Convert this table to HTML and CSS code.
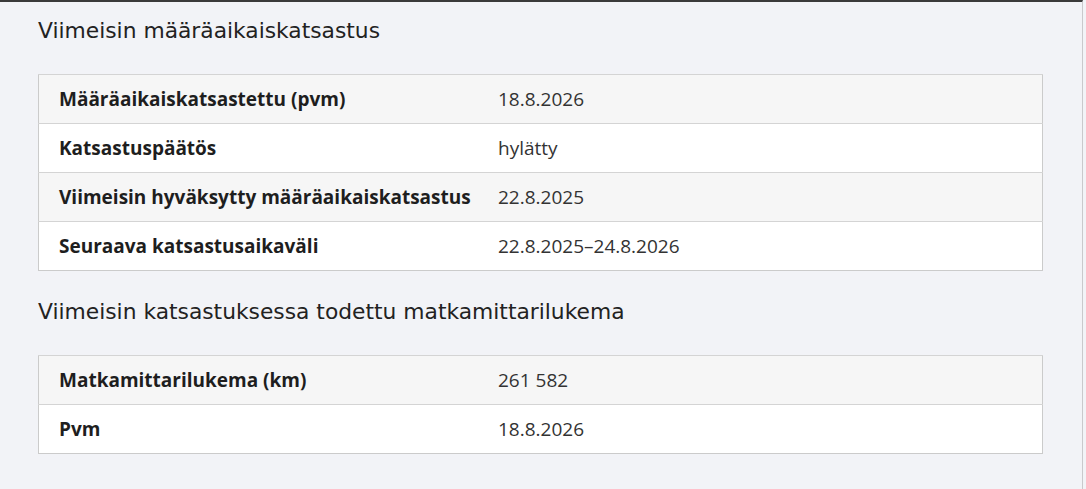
FILE: index.html
```html
<!DOCTYPE html>
<html lang="fi">
<head>
  <meta charset="UTF-8" />
  <title>Katsastustiedot</title>
  <link rel="stylesheet" href="styles.css">
</head>
<body>
  <div class="panel">
    <!-- Määräaikaiskatsastus -->
    <h2>Viimeisin määräaikaiskatsastus</h2>
    <table class="info-table">
      <tr>
        <th>Määräaikaiskatsastettu (pvm)</th>
        <td>18.8.2026</td>
      </tr>
      <tr>
        <th>Katsastuspäätös</th>
        <td>hylätty</td>
      </tr>
      <tr>
        <th>Viimeisin hyväksytty määräaikaiskatsastus</th>
        <td>22.8.2025</td>
      </tr>
      <tr>
        <th>Seuraava katsastusaikaväli</th>
        <td>22.8.2025–24.8.2026</td>
      </tr>
    </table>

    <!-- Matkamittarilukema -->
    <h2>Viimeisin katsastuksessa todettu matkamittarilukema</h2>
    <table class="info-table">
      <tr>
        <th>Matkamittarilukema (km)</th>
        <td>261 582</td>
      </tr>
      <tr>
        <th>Pvm</th>
        <td>18.8.2026</td>
      </tr>
    </table>
  </div>
</body>
</html>
```

FILE: styles.css
```css
body {
    margin: 0;
    padding: 0;
    font-family: "Open Sans", sans-serif;
    background-color: #f2f3f7;
    color: #222;
}

.panel {
    width: 1083px;
    height: 489px;
    box-sizing: border-box;
    border-top: 2px solid #3a3a3a;
    border-right: 1px solid #c9c9cc;
    padding: 14px 39px 0 38px;
}

h2 {
    font-family: "DejaVu Sans", sans-serif;
    font-weight: 400;
    font-size: 21.8px;
    line-height: 30px;
    margin: 0 0 28px 0;
    color: #222;
}

.info-table {
    width: 100%;
    table-layout: fixed;
    border-collapse: collapse;
    border: 1px solid #cbcbcb;
    margin-bottom: 26px;
    font-size: 19px;
}

.info-table tr {
    height: 49px;
    background: #fff;
}

.info-table tr:nth-child(odd) {
    background: #f6f6f6;
}

.info-table th,
.info-table td {
    border-top: 1px solid #d4d4d4;
    padding: 0 20px;
    text-align: left;
    vertical-align: middle;
    white-space: nowrap;
}

.info-table th {
    width: 399px;
    font-weight: 700;
    color: #1e1e1e;
}

.info-table td {
    font-weight: 400;
    color: #333;
}
```
